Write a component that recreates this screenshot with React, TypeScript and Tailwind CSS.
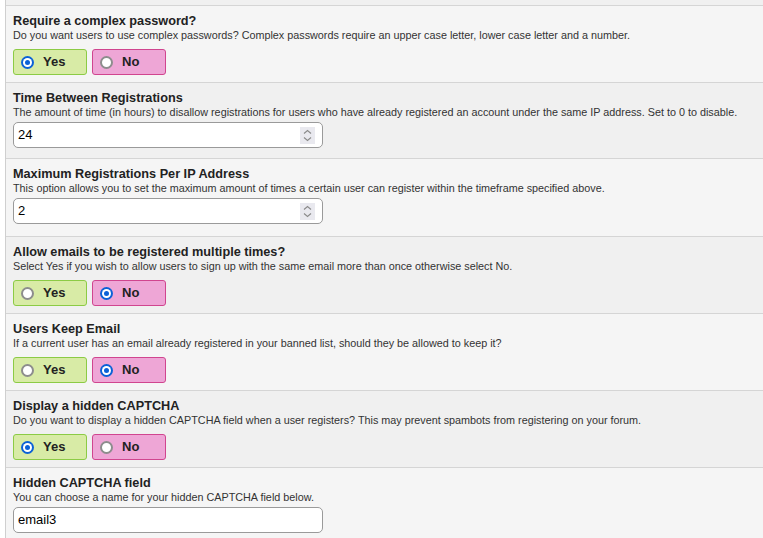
import React from "react";

const font = { fontFamily: '"Liberation Sans", Arial, sans-serif' };

function Radio({ checked }: { checked: boolean }) {
  return checked ? (
    <span className="inline-flex h-[13px] w-[13px] items-center justify-center rounded-full bg-[#0b61d7]">
      <span className="inline-flex h-[9px] w-[9px] items-center justify-center rounded-full bg-white">
        <span className="h-[5px] w-[5px] rounded-full bg-[#0b61d7]" />
      </span>
    </span>
  ) : (
    <span className="inline-block h-[13px] w-[13px] rounded-full border-2 border-[#8d8d8d] bg-white" />
  );
}

function YesNo({ yes }: { yes: boolean }) {
  return (
    <div className="mt-[7px] flex gap-[5px]">
      <div className="flex h-[26px] w-[74px] items-center gap-[9px] rounded-[3px] border border-[#8ccb45] bg-[#d8eba6] pl-[7px]">
        <Radio checked={yes} />
        <span className="text-[13px] font-bold text-[#222]">Yes</span>
      </div>
      <div className="flex h-[26px] w-[74px] items-center gap-[9px] rounded-[3px] border border-[#d0458f] bg-[#eea6d6] pl-[7px]">
        <Radio checked={!yes} />
        <span className="text-[13px] font-bold text-[#222]">No</span>
      </div>
    </div>
  );
}

function TextInput({ value, spinner }: { value: string; spinner?: boolean }) {
  return (
    <div className="mt-[3px] flex h-[26px] w-[310px] items-center justify-between rounded-[5px] border border-[#9a9a9a] bg-white pl-[4px] pr-[7px]">
      <span className="text-[13px] text-black">{value}</span>
      {spinner && (
        <span className="flex h-[17px] w-[15px] items-center justify-center bg-[#e9e9ef]">
          <svg width="9" height="13" viewBox="0 0 9 13" fill="none" stroke="#8a8a8a" strokeWidth="1.1">
            <path d="M1 4.5 L4.5 1.5 L8 4.5" />
            <path d="M1 8.5 L4.5 11.5 L8 8.5" />
          </svg>
        </span>
      )}
    </div>
  );
}

function Row({
  title,
  desc,
  dark,
  children,
  pb,
}: {
  title: string;
  desc: string;
  dark?: boolean;
  children: React.ReactNode;
  pb: string;
}) {
  return (
    <div className={`border-b border-[#d5d5d5] pl-[7px] pt-[8px] ${pb} ${dark ? "bg-[#f0f0f0]" : "bg-[#f5f5f5]"}`}>
      <div className="h-[14px] text-[12.7px] font-bold leading-[14px] text-[#222]">{title}</div>
      <div className="h-[14px] text-[10.8px] leading-[14px] text-[#333]">{desc}</div>
      {children}
    </div>
  );
}

export default function App() {
  return (
    <div className="h-[538px] w-[763px] overflow-hidden bg-white" style={font}>
      <div className="ml-[5px] h-full border-l border-[#cfcfcf]">
        <div className="h-[6px] border-b border-[#d5d5d5] bg-[#f0f0f0]" />
        <Row
          title="Require a complex password?"
          desc="Do you want users to use complex passwords? Complex passwords require an upper case letter, lower case letter and a number."
          pb="pb-[7px]"
        >
          <YesNo yes />
        </Row>
        <Row
          title="Time Between Registrations"
          desc="The amount of time (in hours) to disallow registrations for users who have already registered an account under the same IP address. Set to 0 to disable."
          dark
          pb="pb-[10px]"
        >
          <TextInput value="24" spinner />
        </Row>
        <Row
          title="Maximum Registrations Per IP Address"
          desc="This option allows you to set the maximum amount of times a certain user can register within the timeframe specified above."
          pb="pb-[12px]"
        >
          <TextInput value="2" spinner />
        </Row>
        <Row
          title="Allow emails to be registered multiple times?"
          desc="Select Yes if you wish to allow users to sign up with the same email more than once otherwise select No."
          dark
          pb="pb-[7px]"
        >
          <YesNo yes={false} />
        </Row>
        <Row
          title="Users Keep Email"
          desc="If a current user has an email already registered in your banned list, should they be allowed to keep it?"
          pb="pb-[7px]"
        >
          <YesNo yes={false} />
        </Row>
        <Row
          title="Display a hidden CAPTCHA"
          desc="Do you want to display a hidden CAPTCHA field when a user registers? This may prevent spambots from registering on your forum."
          dark
          pb="pb-[7px]"
        >
          <YesNo yes />
        </Row>
        <Row
          title="Hidden CAPTCHA field"
          desc="You can choose a name for your hidden CAPTCHA field below."
          pb="pb-[10px]"
        >
          <TextInput value="email3" />
        </Row>
      </div>
    </div>
  );
}
